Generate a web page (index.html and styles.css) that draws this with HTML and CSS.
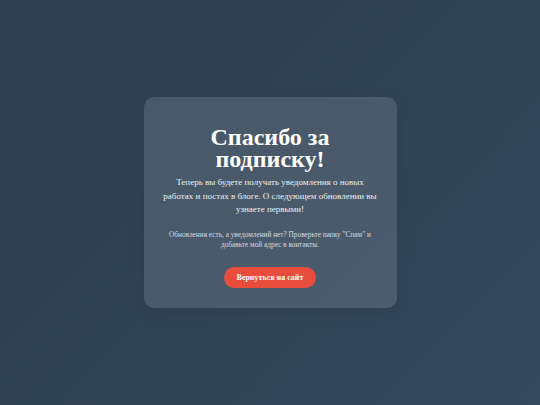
FILE: index.html
```html
<!DOCTYPE html>
<html lang="ru">
<head>
<meta charset="utf-8">
<link rel="stylesheet" href="styles.css">
</head>
<body>
<main class="page">
  <section class="card">
    <h1 class="title">Спасибо за подписку!</h1>
    <p class="lead">Теперь вы будете получать уведомления о новых работах и постах в блоге. О следующем обновлении вы узнаете первыми!</p>
    <p class="note">Обновления есть, а уведомлений нет? Проверьте папку "Спам" и добавьте мой адрес в контакты.</p>
    <a class="btn" href="#">Вернуться на сайт</a>
  </section>
</main>
</body>
</html>
```

FILE: styles.css
```css
html, body {
  margin: 0;
  padding: 0;
  height: 100%;
}
body {
  background: linear-gradient(135deg, #2c3e50 0%, #34495e 100%);
  font-family: "Liberation Serif", "Times New Roman", serif;
  color: #ecf0f1;
}
.page {
  min-height: 100vh;
  display: flex;
  align-items: center;
  justify-content: center;
}
.card {
  width: 253px;
  box-sizing: border-box;
  padding: 29px 16px 20px;
  background: rgba(255, 255, 255, 0.12);
  border-radius: 10px;
  text-align: center;
  box-shadow: 0 4px 16px rgba(0, 0, 0, 0.1);
}
.title {
  margin: 0 0 6px;
  font-size: 24px;
  line-height: 22px;
  font-weight: bold;
  color: #ffffff;
}
.lead {
  margin: 0 0 13px;
  padding: 0 2px;
  font-size: 9px;
  line-height: 13.5px;
}
.note {
  margin: 0 0 15px;
  font-size: 7.3px;
  line-height: 10.5px;
  color: #d5dbe0;
}
.btn {
  display: inline-block;
  background: #e74c3c;
  color: #ffffff;
  font-size: 8px;
  font-weight: bold;
  line-height: 10px;
  text-decoration: none;
  padding: 5.5px 13px;
  border-radius: 12px;
}
```
